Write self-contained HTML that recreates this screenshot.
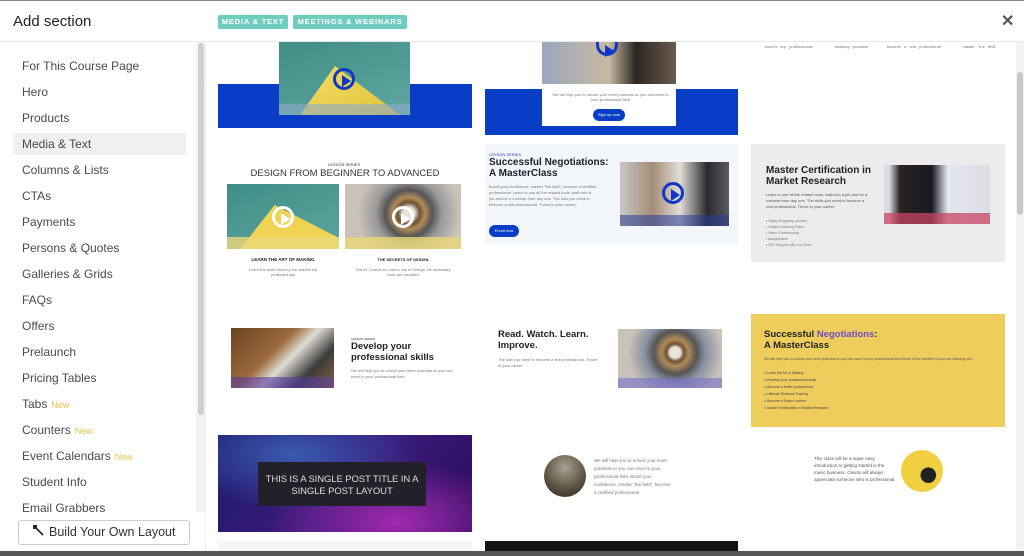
<!DOCTYPE html>
<html><head><meta charset="utf-8"><style>
*{margin:0;padding:0;box-sizing:border-box}
body{width:1024px;height:556px;overflow:hidden;background:#fff;font-family:"Liberation Sans",sans-serif;position:relative}
.a{position:absolute}
.side div.i{position:absolute;left:22px;font-size:12px;color:#4a4a4a}
.new{color:#e8c24a;font-size:9px;margin-left:4px}
.t{font-size:4px;color:#777;position:absolute}
.play{position:absolute;border-radius:50%;border:3px solid #1038c8;}
.play:after{content:"";position:absolute;left:36%;top:24%;border-left:9px solid #1038c8;border-top:6px solid transparent;border-bottom:6px solid transparent}
.wp{border-color:#fff}.wp:after{border-left-color:#fff}
.tag{position:absolute;top:15px;height:14px;background:#6fcdbf;border-radius:2px;color:#fff;font-size:7.5px;letter-spacing:0.8px;line-height:14px;text-align:center;font-weight:bold;white-space:nowrap}
</style></head><body>
<div class="a" style="left:0;top:0;width:1024px;height:1px;background:#888"></div>
<div class="a" style="left:13px;top:13px;font-size:15px;color:#222">Add section</div>
<div class="tag" style="left:218px;width:70px">MEDIA &amp; TEXT</div>
<div class="tag" style="left:293px;width:114px">MEETINGS &amp; WEBINARS</div>
<div class="a" style="left:1001px;top:11px;font-size:16px;color:#555;font-weight:bold">✕</div>
<div class="a" style="left:0;top:41px;width:1024px;height:1px;background:#e8e8e8"></div>
<div class="side">
<div class="a" style="left:13px;top:133px;width:173px;height:22px;background:#f0f0f0;border-radius:3px"></div>
<div class="i" style="top:59px">For This Course Page</div>
<div class="i" style="top:85px">Hero</div>
<div class="i" style="top:111px">Products</div>
<div class="i" style="top:137px">Media &amp; Text</div>
<div class="i" style="top:163px">Columns &amp; Lists</div>
<div class="i" style="top:189px">CTAs</div>
<div class="i" style="top:215px">Payments</div>
<div class="i" style="top:241px">Persons &amp; Quotes</div>
<div class="i" style="top:267px">Galleries &amp; Grids</div>
<div class="i" style="top:293px">FAQs</div>
<div class="i" style="top:319px">Offers</div>
<div class="i" style="top:345px">Prelaunch</div>
<div class="i" style="top:371px">Pricing Tables</div>
<div class="i" style="top:397px">Tabs<span class="new">New</span></div>
<div class="i" style="top:423px">Counters<span class="new">New</span></div>
<div class="i" style="top:449px">Event Calendars<span class="new">New</span></div>
<div class="i" style="top:475px">Student Info</div>
<div class="i" style="top:501px">Email Grabbers</div>
</div>
<div class="a" style="left:196px;top:42px;width:10px;height:470px;background:#f3f3f3"></div>
<div class="a" style="left:198px;top:43px;width:6px;height:372px;background:#cfcfcf;border-radius:3px"></div>
<div class="a" style="left:0;top:513px;width:205px;height:38px;background:#fff"></div>
<div class="a" style="left:205px;top:42px;width:1px;height:509px;background:#eee"></div>
<div class="a" style="left:18px;top:520px;width:172px;height:25px;border:1px solid #ccc;border-radius:3px;font-size:12.5px;color:#333;line-height:23px;padding-left:30px">Build Your Own Layout</div>
<svg class="a" style="left:32px;top:524px" width="14" height="14"><line x1="3" y1="3" x2="11" y2="11" stroke="#222" stroke-width="1.6"/><rect x="1" y="1" width="4" height="4" fill="#222"/></svg>
<div class="a" style="left:1016px;top:42px;width:8px;height:509px;background:#f2f2f2"></div>
<div class="a" style="left:1017px;top:72px;width:6px;height:143px;background:#c8c8c8;border-radius:3px"></div>
<!-- row1 -->
<div class="a" style="left:218px;top:84px;width:254px;height:44px;background:#0a3dc6"></div>
<div class="a" style="left:279px;top:42px;width:131px;height:73px;background:linear-gradient(160deg,#3f8e86,#62a7a2)"></div>
<div class="a" style="left:300px;top:66px;width:100px;height:49px;background:linear-gradient(150deg,#f2dc64,#e0c43a);clip-path:polygon(0 100%,35% 0,100% 100%)"></div>
<div class="a" style="left:279px;top:104px;width:131px;height:11px;background:rgba(140,170,200,.6)"></div>
<div class="play" style="left:333px;top:68px;width:22px;height:22px"></div>
<div class="a" style="left:485px;top:89px;width:253px;height:46px;background:#0a3dc6"></div>
<div class="a" style="left:542px;top:42px;width:134px;height:42px;background:linear-gradient(90deg,#9aa7c0,#c9b8a0 50%,#2b2622 70%,#6b5c50)"></div>
<div class="play" style="left:596px;top:42px;width:22px;height:14px;border-top:none;border-radius:0 0 11px 11px"></div>
<div class="a" style="left:542px;top:89px;width:134px;height:37px;background:#fff"></div>
<div class="t" style="left:548px;top:92px;width:125px;text-align:center">We will help you to unlock your inner potential so you can excel in your professional field</div>
<div class="a" style="left:593px;top:109px;width:32px;height:12px;background:#0a3dc6;border-radius:6px;font-size:4px;color:#fff;text-align:center;line-height:12px">Sign up now</div>
<div class="t" style="left:765px;top:44px;word-spacing:2px">world's top professionals &nbsp;&nbsp;&nbsp;&nbsp;&nbsp; amazing products &nbsp;&nbsp;&nbsp;&nbsp; become a real professional &nbsp;&nbsp;&nbsp;&nbsp;&nbsp; master "the field"</div>
<!-- row2 col1 -->
<div class="a" style="left:328px;top:162px;font-size:4px;color:#333">LESSON SERIES</div>
<div class="a" style="left:218px;top:168px;width:254px;text-align:center;font-size:9.5px;color:#333">DESIGN FROM BEGINNER TO ADVANCED</div>
<div class="a" style="left:227px;top:184px;width:112px;height:65px;background:linear-gradient(160deg,#3e8e87,#5fa6a0)"></div>
<div class="a" style="left:240px;top:205px;width:99px;height:44px;background:#eed452;clip-path:polygon(0 100%,35% 0,100% 75%,100% 100%)"></div>
<div class="a" style="left:227px;top:237px;width:112px;height:12px;background:rgba(235,215,120,.8)"></div>
<div class="play wp" style="left:272px;top:206px;width:22px;height:22px"></div>
<div class="a" style="left:345px;top:184px;width:116px;height:65px;background:radial-gradient(circle at 55% 45%,#e8e2d8 8%,#6d5036 15%,#b08a58 22%,#555 32%,#999 45%,#c9c2b8 70%)"></div>
<div class="a" style="left:345px;top:237px;width:116px;height:12px;background:rgba(235,215,120,.8)"></div>
<div class="play wp" style="left:392px;top:206px;width:22px;height:22px"></div>
<div class="a" style="left:227px;top:257px;width:112px;text-align:center;font-size:4.5px;font-weight:bold;color:#222">LEARN THE ART OF MAKING</div>
<div class="t" style="left:240px;top:267px;width:86px;text-align:center">Learn the tools used by the world's top professionals</div>
<div class="a" style="left:345px;top:257px;width:116px;text-align:center;font-size:4px;font-weight:bold;color:#222">THE SECRETS OF DESIGN</div>
<div class="t" style="left:355px;top:267px;width:96px;text-align:center">The #1 Course to Land a Job in Design. All necessary tools are included</div>
<!-- row2 col2 -->
<div class="a" style="left:485px;top:144px;width:253px;height:100px;background:#f3f6fb"></div>
<div class="a" style="left:489px;top:152px;font-size:4px;color:#1a3ec8">LESSON SERIES</div>
<div class="a" style="left:489px;top:157px;font-size:10px;font-weight:bold;color:#1d1d2a;line-height:11px">Successful Negotiations:<br>A MasterClass</div>
<div class="t" style="left:489px;top:184px;width:108px;line-height:6px">Boost your confidence, master "the field", become a certified professional. Learn to use all the related tools, walk into a job and be a rockstar from day one. The skill you need to become a real professional. Thrive in your career.</div>
<div class="a" style="left:489px;top:225px;width:30px;height:12px;background:#0a3dc6;border-radius:6px;font-size:4px;color:#fff;line-height:12px;text-align:center">Enroll now</div>
<div class="a" style="left:620px;top:162px;width:109px;height:64px;background:linear-gradient(90deg,#c9c8c4,#a58c78 30%,#e0dcd6 55%,#2a2a30 80%,#5a5a60)"></div>
<div class="a" style="left:620px;top:215px;width:109px;height:11px;background:rgba(40,60,150,.55)"></div>
<div class="play" style="left:662px;top:182px;width:22px;height:22px"></div>
<!-- row2 col3 -->
<div class="a" style="left:751px;top:144px;width:254px;height:118px;background:#ececec"></div>
<div class="a" style="left:766px;top:165px;font-size:10px;font-weight:bold;color:#222;line-height:11px">Master Certification in<br>Market Research</div>
<div class="t" style="left:766px;top:192px;width:102px;line-height:6px;color:#555">Learn to use all the related tools, walk into a job and be a rockstar from day one. The skills you need to become a real professional. Thrive in your career.</div>
<div class="t" style="left:766px;top:218px;line-height:6px;font-size:3.5px">• Highly Engaging courses<br>• Unique Learning Paths<br>• Video Conferencing<br>• Assignments<br>• 24/7 Support with Live Chat</div>
<div class="a" style="left:884px;top:165px;width:106px;height:59px;background:linear-gradient(90deg,#d8dae4 5%,#2a2220 15%,#1a1a22 45%,#e4e6ee 60%,#dcdde6)"></div>
<div class="a" style="left:884px;top:213px;width:106px;height:11px;background:rgba(200,70,100,.75)"></div>
<!-- row3 -->
<div class="a" style="left:231px;top:328px;width:103px;height:60px;background:linear-gradient(135deg,#6b4420,#9a6a3c 40%,#e0dcd4 55%,#3a3a3a 75%,#8a6440)"></div>
<div class="a" style="left:231px;top:377px;width:103px;height:11px;background:rgba(90,60,160,.6)"></div>
<div class="a" style="left:351px;top:337px;font-size:3px;color:#333">LESSON SERIES</div>
<div class="a" style="left:351px;top:341px;font-size:9.5px;font-weight:bold;color:#222;line-height:11px">Develop your<br>professional skills</div>
<div class="t" style="left:351px;top:368px;width:105px;line-height:6px">We will help you to unlock your inner potential so you can excel in your professional field</div>
<div class="a" style="left:498px;top:329px;font-size:9.5px;font-weight:bold;color:#222;line-height:11px">Read. Watch. Learn.<br>Improve.</div>
<div class="t" style="left:498px;top:357px;width:100px;line-height:6px">The skill you need to become a real professional. Thrive in your career</div>
<div class="a" style="left:618px;top:329px;width:104px;height:59px;background:radial-gradient(circle at 55% 40%,#e8e2d8 8%,#6d5036 13%,#b08a58 20%,#555 32%,#8890a0 45%,#c9c2b8 70%)"></div>
<div class="a" style="left:618px;top:378px;width:104px;height:10px;background:rgba(120,110,200,.6)"></div>
<div class="a" style="left:751px;top:314px;width:254px;height:113px;background:#efcd5c"></div>
<div class="a" style="left:764px;top:329px;font-size:9.5px;font-weight:bold;color:#1e1e1e;line-height:11px">Successful <span style="color:#6a4fc8">Negotiations</span>:<br>A MasterClass</div>
<div class="t" style="left:764px;top:356px;width:225px;line-height:6px;color:#555;font-size:3.5px">We will help you to unlock your inner potential so you can excel in your professional field Some of the benefits of your our trainings are:</div>
<div class="t" style="left:764px;top:370px;line-height:7px;color:#444;font-size:3.5px"><span style="color:#6a4fc8">●</span> Learn the Art of Making<br><span style="color:#6a4fc8">●</span> Develop your professional skills<br><span style="color:#6a4fc8">●</span> Become a better professional<br><span style="color:#6a4fc8">●</span> Ultimate Distance Training<br><span style="color:#6a4fc8">●</span> Become a Super Learner<br><span style="color:#6a4fc8">●</span> Master Certification in Market Research</div>
<!-- row4 -->
<div class="a" style="left:218px;top:435px;width:254px;height:97px;background:radial-gradient(ellipse at 30% 20%,#3a5ab0,transparent 50%),radial-gradient(ellipse at 70% 90%,#a22ab0,transparent 50%),linear-gradient(135deg,#1a1a6a,#3a1a7a 50%,#2a0a5a)"></div>
<div class="a" style="left:258px;top:462px;width:168px;height:44px;background:#222028"></div>
<div class="a" style="left:258px;top:474px;width:168px;text-align:center;font-size:9.5px;color:#ddd;line-height:12px;white-space:nowrap;letter-spacing:-0.1px">THIS IS A SINGLE POST TITLE IN A<br>SINGLE POST LAYOUT</div>
<div class="a" style="left:544px;top:455px;width:42px;height:42px;border-radius:50%;background:radial-gradient(circle at 50% 30%,#a8a090,#5a5040 60%,#2a2420)"></div>
<div class="t" style="left:594px;top:457px;width:78px;line-height:8px;font-size:4.5px">We will help you to unlock your inner potential so you can excel in your professional field. Boost your confidence, master "the field", become a certified professional</div>
<div class="t" style="left:814px;top:455px;width:82px;line-height:7px;font-size:4.5px;color:#555">This class will be a super easy introduction to getting started in the music business. Clients will always appreciate someone who is professional.</div>
<div class="a" style="left:901px;top:450px;width:42px;height:42px;border-radius:50%;background:radial-gradient(circle at 65% 60%,#222 20%,#f0d040 22%)"></div>
<!-- row5 -->
<div class="a" style="left:218px;top:541px;width:254px;height:10px;background:#f5f5f7"></div>
<div class="a" style="left:485px;top:541px;width:253px;height:10px;background:#141414"></div>
<div class="a" style="left:0;top:551px;width:1024px;height:5px;background:#555"></div>
</body></html>
